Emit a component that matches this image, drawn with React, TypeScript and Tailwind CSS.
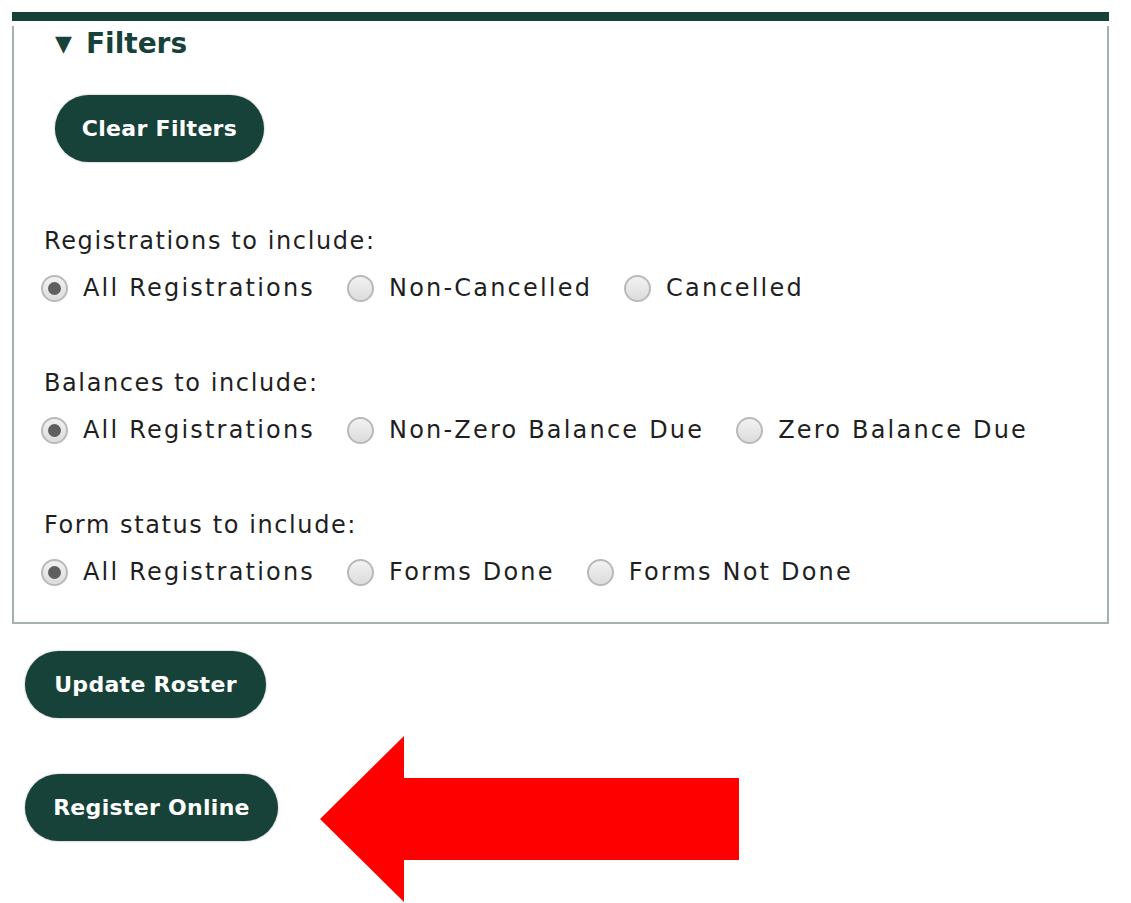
import React from "react";

const font = { fontFamily: '"DejaVu Sans", "Noto Sans", sans-serif' };

function Radio({ checked, label }: { checked?: boolean; label: string }) {
  return (
    <label className="flex items-center">
      <span className="relative flex h-[27px] w-[27px] items-center justify-center rounded-full border-2 border-[#b9b9b9] bg-[linear-gradient(#f2f2f2,#dcdcdc)]">
        {checked && <span className="h-[13px] w-[13px] rounded-full bg-[#5f5f5f]" />}
      </span>
      <span className="ml-[15px] text-[24px] text-[#1f1f1f] tracking-[2.2px]">{label}</span>
    </label>
  );
}

function Group({ title, options }: { title: string; options: string[] }) {
  return (
    <div className="flex flex-col">
      <div className="ml-[3px] text-[24px] text-[#1f1f1f] leading-[30px] tracking-[1.6px]">{title}</div>
      <div className="mt-[14px] flex items-center gap-[32px]">
        {options.map((o, i) => (
          <Radio key={o} label={o} checked={i === 0} />
        ))}
      </div>
    </div>
  );
}

function Pill({ children, className }: { children: React.ReactNode; className?: string }) {
  return (
    <button
      className={
        "flex h-[67px] items-center justify-center rounded-full bg-[#17423a] text-[22px] font-semibold text-white tracking-[0.3px] shadow-[0_0_2px_rgba(0,0,0,0.4)] " +
        (className ?? "")
      }
    >
      {children}
    </button>
  );
}

export default function App() {
  return (
    <div className="relative h-[903px] w-[1131px] bg-white" style={font}>
      <div className="pt-[12px] pl-[12px] pr-[22px]">
        <div className="h-[9px] w-full bg-[#17423a]" />
        <div className="h-[598px] border-x-2 border-b-2 border-[#a6b0ae] pl-[27px]">
          <div className="ml-[14px] mt-[5px] flex items-center text-[28px] font-bold text-[#17423a] leading-[36px]">
            <span className="text-[22px] mr-[14px]">▼</span>
            <span>Filters</span>
          </div>
          <Pill className="ml-[14px] mt-[33px] w-[209px]">Clear Filters</Pill>
          <div className="mt-[64px] flex flex-col gap-[62px]">
            <Group title="Registrations to include:" options={["All Registrations", "Non-Cancelled", "Cancelled"]} />
            <Group title="Balances to include:" options={["All Registrations", "Non-Zero Balance Due", "Zero Balance Due"]} />
            <Group title="Form status to include:" options={["All Registrations", "Forms Done", "Forms Not Done"]} />
          </div>
        </div>
        <Pill className="ml-[13px] mt-[27px] w-[241px]">Update Roster</Pill>
        <Pill className="ml-[13px] mt-[56px] w-[253px]">Register Online</Pill>
      </div>
      <svg className="absolute left-[320px] top-[736px]" width="420" height="167" viewBox="0 0 420 167">
        <polygon points="0,83 84,0 84,42 419,42 419,124 84,124 84,166" fill="#ff0000" />
      </svg>
    </div>
  );
}
